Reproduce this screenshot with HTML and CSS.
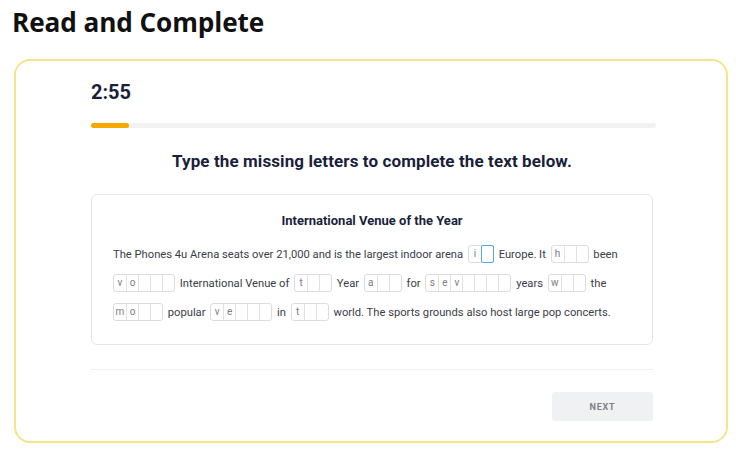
FILE: index.html
```html
<!DOCTYPE html>
<html>
<head>
<meta charset="utf-8">
<link rel="stylesheet" href="styles.css">
</head>
<body>
<h1 class="page-title">Read and Complete</h1>
<div class="card">
  <div class="content">
    <div class="timer">2:55</div>
    <div class="progress"><div class="progress-fill" style="width:38px"></div></div>
    <h2 class="instruction">Type the missing letters to complete the text below.</h2>
    <div class="passage">
      <h3 class="passage-title">International Venue of the Year</h3>
      <div class="line">The Phones 4u Arena seats over 21,000 and is the largest indoor arena
        <span class="word"><span class="cell">i</span><span class="cell focus"></span></span> Europe. It
        <span class="word"><span class="cell">h</span><span class="cell"></span><span class="cell"></span></span> been</div>
      <div class="line"><span class="word start"><span class="cell">v</span><span class="cell">o</span><span class="cell"></span><span class="cell"></span><span class="cell"></span></span> International Venue of
        <span class="word"><span class="cell">t</span><span class="cell"></span><span class="cell"></span></span> Year
        <span class="word"><span class="cell">a</span><span class="cell"></span><span class="cell"></span></span> for
        <span class="word"><span class="cell">s</span><span class="cell">e</span><span class="cell">v</span><span class="cell"></span><span class="cell"></span><span class="cell"></span><span class="cell"></span></span> years
        <span class="word"><span class="cell">w</span><span class="cell"></span><span class="cell"></span></span> the</div>
      <div class="line"><span class="word start"><span class="cell">m</span><span class="cell">o</span><span class="cell"></span><span class="cell"></span></span> popular
        <span class="word"><span class="cell">v</span><span class="cell">e</span><span class="cell"></span><span class="cell"></span><span class="cell"></span></span> in
        <span class="word"><span class="cell">t</span><span class="cell"></span><span class="cell"></span></span> world. The sports grounds also host large pop concerts.</div>
    </div>
    <hr class="divider">
    <div class="actions"><button class="next">NEXT</button></div>
  </div>
</div>
</body>
</html>
```
FILE: styles.css
```css
* { box-sizing: border-box; }
body {
  margin: 0;
  background: #fff;
  font-family: "Roboto", "Noto Sans", sans-serif;
  color: #1b1f3b;
}
.page-title {
  margin: 0;
  padding: 4px 0 0 12px;
  height: 59px;
  font-family: "Open Sans", "Noto Sans", sans-serif;
  font-weight: 700;
  font-size: 26.2px;
  line-height: 36px;
  color: #111;
  letter-spacing: -0.1px;
}
.card {
  margin-left: 14px;
  width: 714px;
  height: 384px;
  border: 2px solid #f6e48a;
  border-radius: 16px;
  padding: 0 73px 0 75px;
}
.content {
  width: 562px;
}
.timer {
  margin-top: 20px;
  font-size: 20px;
  font-weight: 700;
  line-height: 22px;
  color: #1b1f3b;
}
.progress {
  margin-top: 20px;
  height: 5px;
  background: #f2f2f2;
  border-radius: 3px;
  width: 565px;
}
.progress-fill {
  height: 5px;
  background: #f6a900;
  border-radius: 3px;
}
.instruction {
  margin: 22px 0 0;
  text-align: center;
  font-size: 17px;
  font-weight: 700;
  line-height: 22px;
  letter-spacing: 0.1px;
  color: #1b1f3b;
}
.passage {
  margin-top: 22px;
  border: 1px solid #e6e6e6;
  border-radius: 6px;
  height: 151px;
  padding: 17px 21px 0;
}
.passage-title {
  margin: 0 0 10px;
  text-align: center;
  font-size: 13px;
  font-weight: 700;
  line-height: 18px;
  color: #1b1f3b;
}
.line {
  font-size: 11.2px;
  line-height: 29px;
  color: #3a3d48;
  white-space: nowrap;
}
.word {
  display: inline-flex;
  vertical-align: middle;
  border: 1px solid #dcdcdc;
  border-radius: 3px;
  height: 18px;
  margin: 0 2px;
  position: relative;
  top: -1px;
}
.word.start { margin-left: 0; }
.cell {
  width: 12px;
  height: 16px;
  border-left: 1px solid #e2e2e2;
  font-size: 10px;
  line-height: 16px;
  text-align: center;
  color: #7a7d85;
}
.cell:first-child { border-left: none; }
.cell.focus {
  border: 1px solid #58a6e0;
  border-radius: 2px;
  height: 18px;
  margin: -1px -1px -1px 0;
  width: 13px;
}
.divider {
  margin: 24px 0 0;
  border: none;
  border-top: 1px solid #eeeeee;
}
.actions {
  display: flex;
  justify-content: flex-end;
  margin-top: 22px;
}
.next {
  width: 101px;
  height: 29px;
  border: none;
  border-radius: 3px;
  background: #f0f1f3;
  font-family: "Roboto", sans-serif;
  font-weight: 700;
  font-size: 9px;
  letter-spacing: 0.8px;
  color: #7d8088;
}
```
